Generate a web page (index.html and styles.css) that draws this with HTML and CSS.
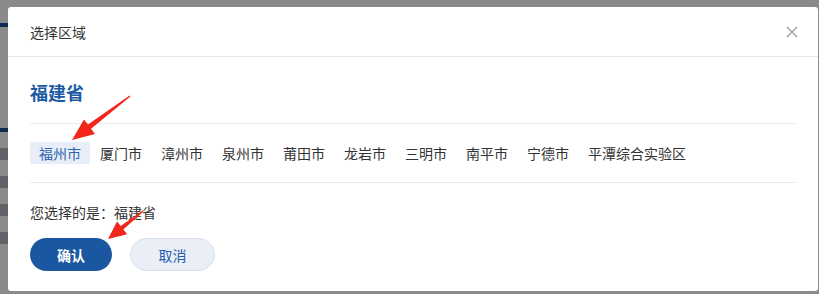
FILE: index.html
```html
<!DOCTYPE html>
<html>
<head>
  <meta charset="UTF-8">
  <title>选择区域</title>
  <link rel="stylesheet" href="styles.css">
</head>
<body>
  <div class="page">
    <div class="page-bar"></div>
    <div class="page-bar second"></div>
    <div class="page-stub"></div>
    <div class="page-stub"></div>
    <div class="page-stub"></div>
    <div class="page-stub"></div>
  </div>

  <div class="mask"></div>

  <div class="modal">
    <div class="modal-header">
      <span class="modal-title">选择区域</span>
      <svg class="close" width="12" height="12" viewBox="0 0 12 12">
        <path d="M1 1 L11 11 M11 1 L1 11" stroke="#9a9a9a" stroke-width="1.2" fill="none"/>
      </svg>
    </div>
    <div class="modal-body">
      <div class="province">福建省</div>
      <div class="cities">
        <span class="city active">福州市</span>
        <span class="city">厦门市</span>
        <span class="city">漳州市</span>
        <span class="city">泉州市</span>
        <span class="city">莆田市</span>
        <span class="city">龙岩市</span>
        <span class="city">三明市</span>
        <span class="city">南平市</span>
        <span class="city">宁德市</span>
        <span class="city">平潭综合实验区</span>
      </div>
      <div class="chosen">您选择的是：福建省</div>
      <div class="actions">
        <button class="btn btn-primary">确认</button>
        <button class="btn btn-default">取消</button>
      </div>
    </div>
  </div>

  <!-- 标注箭头 -->
  <svg class="marks" width="819" height="294" viewBox="0 0 819 294">
    <polygon fill="#f2261b" points="129.6,95.4 88,124.6 84,119.4 72,140 95,134 91,128.8 130.4,96.6"/>
    <polygon fill="#f2261b" points="142.6,210.5 120.7,226.1 117,221.5 108,239 127.2,234.2 123.3,229.5 143.4,211.5"/>
  </svg>
</body>
</html>
```

FILE: styles.css
```css
body {
  margin: 0;
  font-family: "Noto Sans CJK SC", "Noto Sans", sans-serif;
  background: #fff;
  overflow: hidden;
}
.page {
  height: 294px;
  overflow: hidden;
}
.page-bar {
  height: 4px;
  margin-top: 23px;
  width: 40px;
  background: #1b4f8f;
}
.page-bar.second {
  margin-top: 101px;
}
.page-stub {
  width: 8px;
  height: 12px;
  margin: 16px 0 0;
  background: #7a8494;
  opacity: 0.6;
}
.mask {
  position: fixed;
  top: 0;
  left: 0;
  right: 0;
  bottom: 0;
  background: rgba(0, 0, 0, 0.46);
}
.modal {
  position: fixed;
  left: 8px;
  top: 7px;
  width: 810px;
  height: 284px;
  background: #fff;
  border-radius: 3px;
  box-sizing: border-box;
}
.modal-header {
  height: 49px;
  padding: 0 20px 0 22px;
  display: flex;
  align-items: center;
  justify-content: space-between;
  border-bottom: 1px solid #e8e8e8;
}
.modal-title {
  font-size: 14px;
  color: #333;
}
.close {
  display: block;
}
.modal-body {
  padding: 0 22px;
}
.province {
  padding: 22px 0 18px;
  font-size: 18px;
  line-height: 26px;
  font-weight: bold;
  color: #1d5aa5;
  border-bottom: 1px solid #ececec;
}
.cities {
  display: flex;
  padding: 18px 0;
  border-bottom: 1px solid #ececec;
}
.city {
  font-size: 14px;
  line-height: 22px;
  padding: 0 9px;
  margin-right: 1px;
  color: #333;
  border-radius: 2px;
}
.city.active {
  background: #e8eef8;
  color: #2a62ab;
}
.chosen {
  margin-top: 19px;
  font-size: 14px;
  line-height: 20px;
  color: #333;
}
.actions {
  display: flex;
  gap: 18px;
  margin-top: 16px;
}
.btn {
  height: 33px;
  width: 82px;
  border-radius: 17px;
  font-size: 14px;
  font-family: inherit;
  cursor: pointer;
}
.btn-primary {
  background: #1a57a0;
  border: none;
  color: #fff;
  font-weight: bold;
}
.btn-default {
  width: 85px;
  background: #e9eef7;
  border: 1px solid #d8dfea;
  color: #1f5fae;
}
.marks {
  position: fixed;
  top: 0;
  left: 0;
  pointer-events: none;
}
```
